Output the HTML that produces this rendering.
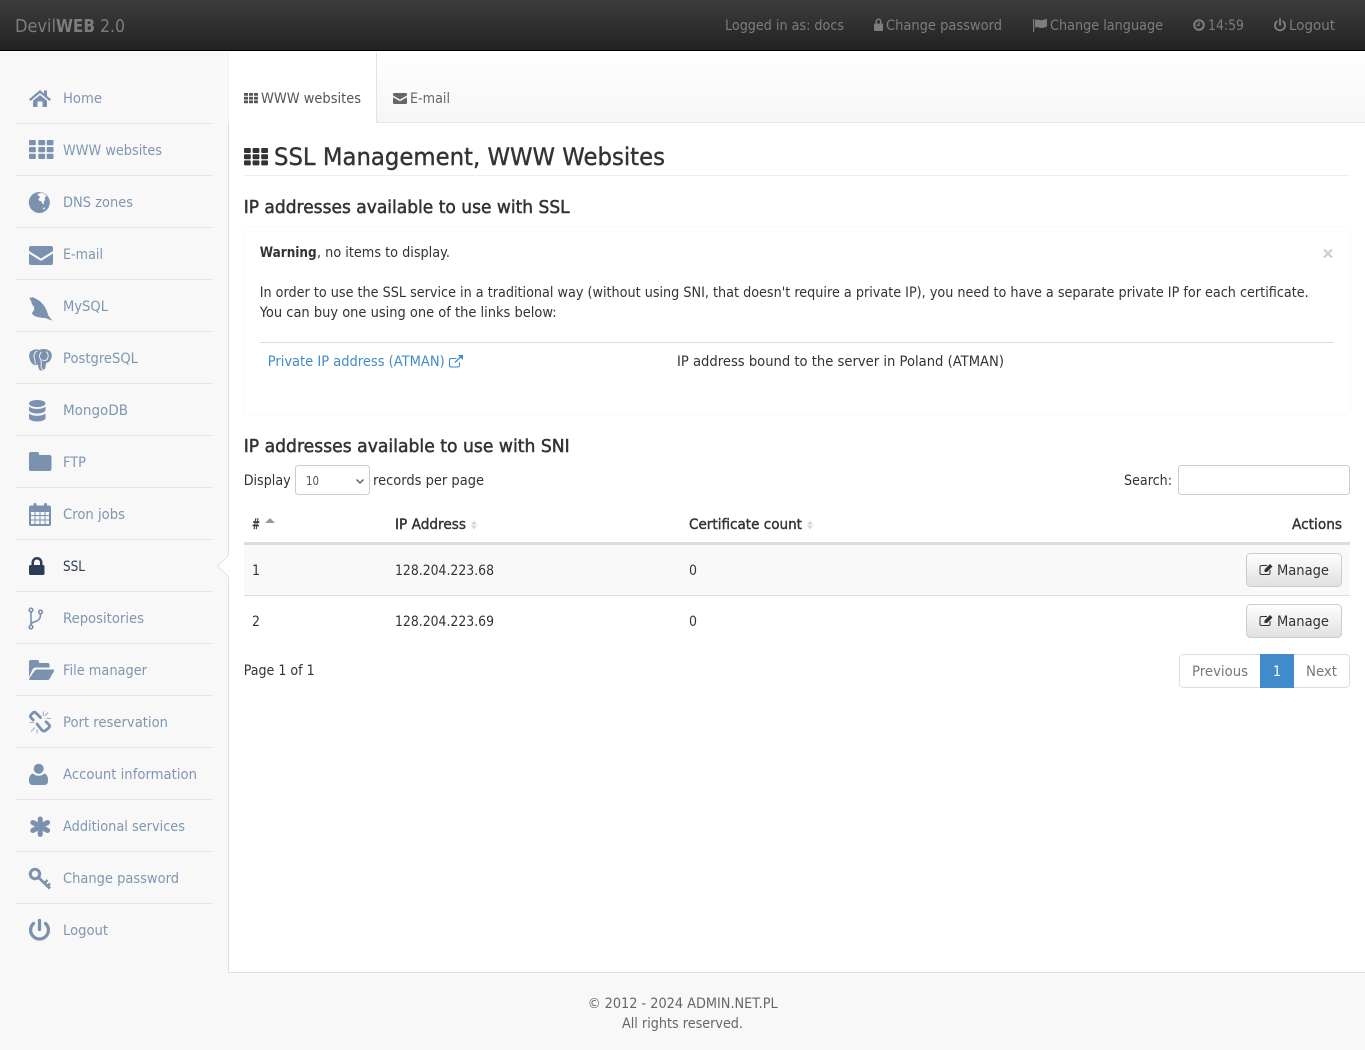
<!DOCTYPE html>
<html lang="en"><head><meta charset="utf-8"><title>DevilWEB 2.0 - SSL Management</title>
<style>
html,body{margin:0;padding:0;background:#f8f8f8;width:1365px;height:1050px;overflow:hidden}
svg{display:block}
text{font-family:"DejaVu Sans","Liberation Sans",sans-serif;font-size:14px;fill:#333;white-space:pre}
.s text{fill:#7f96b2;font-size:14px}
.i{fill:#7a92af}
.t text{fill:#7d7d7d;font-size:14px}
.h3{font-size:18px;stroke:#333;stroke-width:.5px}
.th{stroke:#333;stroke-width:.4px}
</style></head><body>
<svg width="1365" height="1050" viewBox="0 0 1365 1050" xmlns="http://www.w3.org/2000/svg">
<defs>
<linearGradient id="top" x1="0" y1="0" x2="0" y2="1"><stop offset="0" stop-color="#3d3d3d"/><stop offset="1" stop-color="#222"/></linearGradient>
<linearGradient id="tab" x1="0" y1="0" x2="0" y2="1"><stop offset="0" stop-color="#fff"/><stop offset="1" stop-color="#f6f6f6"/></linearGradient>
<linearGradient id="btn" x1="0" y1="0" x2="0" y2="1"><stop offset="0" stop-color="#fff"/><stop offset="1" stop-color="#e0e0e0"/></linearGradient>
</defs>
<rect width="1365" height="1050" fill="#f8f8f8"/>
<!-- content -->
<rect x="229" y="51" width="1136" height="922" fill="#fff"/>
<rect x="228" y="51" width="1" height="72" fill="#eef1f5"/>
<rect x="228" y="123" width="1" height="850" fill="#d9e2ec"/>
<rect x="228" y="972" width="1137" height="1" fill="#d9e2ec"/>
<rect x="377" y="51" width="988" height="71" fill="url(#tab)"/>
<rect x="377" y="122" width="988" height="1" fill="#e5e5e5"/>
<rect x="376" y="53" width="1" height="70" fill="#dde4ec"/>
<!-- topbar -->
<rect width="1365" height="50" fill="url(#top)"/>
<rect y="50" width="1365" height="1" fill="#000"/>
<g class="t">
<text x="15" y="32" style="font-size:18px" textLength="41" lengthAdjust="spacingAndGlyphs">Devil</text>
<text x="56" y="32" style="font-size:18px;font-weight:bold" textLength="39" lengthAdjust="spacingAndGlyphs">WEB</text>
<text x="100" y="32" style="font-size:18px" textLength="25" lengthAdjust="spacingAndGlyphs">2.0</text>
<text x="725" y="30" textLength="119" lengthAdjust="spacingAndGlyphs">Logged in as: docs</text>
<text x="886" y="30" textLength="116" lengthAdjust="spacingAndGlyphs">Change password</text>
<text x="1050" y="30" textLength="113" lengthAdjust="spacingAndGlyphs">Change language</text>
<text x="1208" y="30" textLength="36" lengthAdjust="spacingAndGlyphs">14:59</text>
<text x="1289" y="30" textLength="46" lengthAdjust="spacingAndGlyphs">Logout</text>
</g>
<g fill="#7d7d7d">
<path d="M874 24.500a1 1 0 0 1 1-1h.5v-2a3 3 0 0 1 6 0v2h.5a1 1 0 0 1 1 1V30a1 1 0 0 1-1 1h-7a1 1 0 0 1-1-1zM877 23.500h3v-2a1.500 1.500 0 0 0-3 0z" fill-rule="evenodd"/>
<path d="M1033 19h1.200v13H1033zM1035 20c3-1.500 5 1 8 0 1.500-.4 3-1 4-1v7.500c-1 .3-2.500 1-4 1.400-3 .8-5-1.700-8-.4z"/>
</g>
<circle cx="1199" cy="25" r="4.800" fill="none" stroke="#7d7d7d" stroke-width="2"/>
<path d="M1199 22v3.300h-2.500" fill="none" stroke="#7d7d7d" stroke-width="1.300"/>
<path d="M1276.800 21.500a5 5 0 1 0 6.400 0M1280 19v6" fill="none" stroke="#7d7d7d" stroke-width="1.900" stroke-linecap="round"/>
<!-- sidebar separators -->
<g fill="#e6e6e6">
<rect x="15" y="123" width="198" height="1"/><rect x="15" y="175" width="198" height="1"/><rect x="15" y="227" width="198" height="1"/><rect x="15" y="279" width="198" height="1"/><rect x="15" y="331" width="198" height="1"/><rect x="15" y="383" width="198" height="1"/><rect x="15" y="435" width="198" height="1"/><rect x="15" y="487" width="198" height="1"/><rect x="15" y="539" width="198" height="1"/><rect x="15" y="591" width="198" height="1"/><rect x="15" y="643" width="198" height="1"/><rect x="15" y="695" width="198" height="1"/><rect x="15" y="747" width="198" height="1"/><rect x="15" y="799" width="198" height="1"/><rect x="15" y="851" width="198" height="1"/><rect x="15" y="903" width="198" height="1"/>
</g>
<path d="M229 555L217.500 566L229 577" fill="#fff" stroke="#dfe6ee"/>
<rect x="229" y="556" width="2" height="21" fill="#fff"/>
<!-- sidebar text -->
<g class="s">
<text x="63" y="103" textLength="39" lengthAdjust="spacingAndGlyphs">Home</text>
<text x="63" y="155" textLength="99" lengthAdjust="spacingAndGlyphs">WWW websites</text>
<text x="63" y="207" textLength="70" lengthAdjust="spacingAndGlyphs">DNS zones</text>
<text x="63" y="259" textLength="40" lengthAdjust="spacingAndGlyphs">E-mail</text>
<text x="63" y="311" textLength="45" lengthAdjust="spacingAndGlyphs">MySQL</text>
<text x="63" y="363" textLength="75" lengthAdjust="spacingAndGlyphs">PostgreSQL</text>
<text x="63" y="415" textLength="65" lengthAdjust="spacingAndGlyphs">MongoDB</text>
<text x="63" y="467" textLength="23" lengthAdjust="spacingAndGlyphs">FTP</text>
<text x="63" y="519" textLength="62" lengthAdjust="spacingAndGlyphs">Cron jobs</text>
<text x="63" y="571" textLength="22" lengthAdjust="spacingAndGlyphs" style="fill:#2c3e56">SSL</text>
<text x="63" y="623" textLength="81" lengthAdjust="spacingAndGlyphs">Repositories</text>
<text x="63" y="675" textLength="84" lengthAdjust="spacingAndGlyphs">File manager</text>
<text x="63" y="727" textLength="105" lengthAdjust="spacingAndGlyphs">Port reservation</text>
<text x="63" y="779" textLength="134" lengthAdjust="spacingAndGlyphs">Account information</text>
<text x="63" y="831" textLength="122" lengthAdjust="spacingAndGlyphs">Additional services</text>
<text x="63" y="883" textLength="116" lengthAdjust="spacingAndGlyphs">Change password</text>
<text x="63" y="935" textLength="45" lengthAdjust="spacingAndGlyphs">Logout</text>
</g>
<!-- sidebar icons -->
<g class="i">
<path d="M40 90L29 99.300 30.500 101 40 93 49.500 101 51 99.300 47 96V90.500H44V93.500ZM33 100.800L40 95 47 100.800V106a1 1 0 0 1-1 1H42.500V101.500H37.500V107H34a1 1 0 0 1-1-1Z"/>
<g>
<rect x="29" y="140" width="6.800" height="5.300" rx="1"/><rect x="38.300" y="140" width="6.800" height="5.300" rx="1"/><rect x="46.700" y="140" width="6.800" height="5.300" rx="1"/>
<rect x="29" y="147" width="6.800" height="5.300" rx="1"/><rect x="38.300" y="147" width="6.800" height="5.300" rx="1"/><rect x="46.700" y="147" width="6.800" height="5.300" rx="1"/>
<rect x="29" y="153.700" width="6.800" height="5.300" rx="1"/><rect x="38.300" y="153.700" width="6.800" height="5.300" rx="1"/><rect x="46.700" y="153.700" width="6.800" height="5.300" rx="1"/>
</g>
<circle cx="39.300" cy="202.500" r="10.500"/>
<path d="M38 193.800l3-1 3.500 1 2.200 2.600-2 .8.500 3-1.500 1 .3 2.500-1.500.3-.8-2.500-2.500-.8-.8-2 1.700-1.300-1.200-1.700-1.500-.4zM43.500 207.500l1.800.2-1.300 1.700-1.200-.4z" fill="#f8f8f8"/>
<path d="M31 246h20a2 2 0 0 1 2 2v3L41 258.500 29 251v-3a2 2 0 0 1 2-2zM29 253.500L41 261l12-7.500V263a2 2 0 0 1-2 2H31a2 2 0 0 1-2-2z"/>
<path d="M29.300 297.700L33 297.300 36.500 299 40 301.300 44 305.500 46.700 310.500 48.300 315.500 52.300 320.700 45.500 318 41 317.800 37.500 317 34 315.800 31.700 313.300 33.800 310.500 34.300 307.500 32 304 30.800 300.500Z"/>
<path d="M31 351.500c2.300-2.300 5.500-2.600 8-1.500 3.200-1.500 7.800-1.500 10.800 1 2.700 2.500 2.400 6 .7 9-1 1.700-2.300 2.600-4.300 3-.4 1.500-.5 3.800-1 5.300-.6 2-3.700 2.900-5.200 1.900-1.500-1-1.700-3.400-2-5.700-2.500 1-5 .6-6.800-2-2.200-3.300-3-8.500-.2-12z"/>
<path d="M37.300 351c-2.800 1-4 3.800-3.100 7 .6 2.200 1.400 4 .9 6M41.500 351.800c-1.700 2-2.800 4.200-1.300 6.700 1 1.500 1.300 4 .8 7.500 0 2 1 3.700 2.500 3.700M46 351.500c2.400 2 2.800 4.800 1.300 7.500-1 2-3.800 1.800-5.300.8" fill="none" stroke="#f8f8f8" stroke-width=".9"/>
<path d="M29 403.500c0-2 3.700-3.500 8.200-3.500s8.300 1.500 8.300 3.500-3.800 3.600-8.300 3.600-8.200-1.600-8.200-3.600zM29 406.500c1.700 1.800 4.900 2.400 8.200 2.400s6.600-.6 8.300-2.400V410c0 2-3.800 3.500-8.300 3.500S29 412 29 410zM29 413.500c1.700 1.600 4.900 2.300 8.200 2.300s6.600-.7 8.300-2.300v4.500c0 2-3.800 3.500-8.300 3.500S29 420 29 418z"/>
<path d="M31 452h6a2 2 0 0 1 2 2v1h10.500a2 2 0 0 1 2 2v12a2 2 0 0 1-2 2H31a2 2 0 0 1-2-2V454a2 2 0 0 1 2-2z"/>
<path fill-rule="evenodd" d="M31 505.500h2.500v-1a1.500 1.500 0 0 1 3 0v1h7.500v-1a1.500 1.500 0 0 1 3 0v1H49a2 2 0 0 1 2 2V524a2 2 0 0 1-2 2H31a2 2 0 0 1-2-2V507.500a2 2 0 0 1 2-2zM31 512v3h3.500v-3zM35.500 512v3h4v-3zM40.500 512v3h4v-3zM45.500 512v3H49v-3zM31 516v3.500h3.500V516zM35.500 516v3.500h4V516zM40.500 516v3.500h4V516zM45.500 516v3.500H49V516zM31 520.500V524h3.500v-3.500zM35.500 520.500V524h4v-3.500zM40.500 520.500V524h4v-3.500zM45.500 520.500V524H49v-3.500z"/>
<path fill-rule="evenodd" d="M29 566.500a1.500 1.500 0 0 1 1.500-1.500H31.500v-2.500a5.500 5.500 0 0 1 11 0V565h.5a1.500 1.500 0 0 1 1.500 1.500V573.500a1.500 1.500 0 0 1-1.500 1.500H30.500a1.500 1.500 0 0 1-1.500-1.500zM34 565h6v-2.500a3 3 0 0 0-6 0z" style="fill:#2c3e56"/>
<g fill="none" stroke="#7a92af" stroke-width="1.600">
<circle cx="31" cy="610" r="1.800"/><circle cx="31" cy="627" r="1.800"/><circle cx="40.500" cy="612" r="1.800"/>
<path d="M31 612v13M40.500 614c0 5-2 6.500-5 7.500-2.500.8-4 1-4.500 3"/>
</g>
<path d="M31 660h6a2 2 0 0 1 2 2v1h8.500a2 2 0 0 1 2 2v2.500H36a4 4 0 0 0-3.500 2L29 677V662a2 2 0 0 1 2-2z"/>
<path d="M36.500 669.500H53a1 1 0 0 1 1 1.500l-4.500 8a2 2 0 0 1-1.700 1H30a1 1 0 0 1-.8-1.500l5.300-7.500a2.500 2.500 0 0 1 2-1.500z"/>
<g fill="none" stroke="#7a92af" stroke-width="2.800" stroke-linejoin="round" stroke-linecap="round">
<path d="M40.500 717.500L36 713Q34.300 711.500 32.800 713L31 714.800Q29.800 716.300 31 717.600L33.200 720"/>
<path d="M37 724L42 730.200Q43.800 731.800 45.500 730.500L48.800 727.800Q50.300 726.300 48.800 724.500L46 721.800"/>
</g>
<g fill="none" stroke="#9db0c6" stroke-width="1.100">
<path d="M43.300 711.500v4.500M48 712.500l-3 3.500M51 718.500h-4.500M29.500 722.500h4.500M31 731.500l4-4M37 733.500v-4"/>
</g>
<circle cx="38.700" cy="768.700" r="5"/>
<path d="M33 773.500c1.500 1.500 3.500 2.300 5.700 2.300s4.200-.8 5.700-2.300c2.300.5 3.600 3 3.600 6.500v1.500a3.500 3.500 0 0 1-3.500 3.500H32.500a3.500 3.500 0 0 1-3.500-3.500V780c0-3.500 1.700-6 4-6.500z"/>
<g stroke="#7a92af" stroke-width="5" stroke-linecap="round">
<path d="M40.200 819v15.500M32.800 822.500L47.600 830.500M47.600 822.500L32.800 830.500"/>
</g>
<g fill="none" stroke="#7a92af">
<circle cx="35" cy="874" r="4.700" stroke-width="3"/>
<path d="M38.500 877.500L50 888.500" stroke-width="2.800"/>
<path d="M44 883.500l3.500-3.500M47 886.500l3-3" stroke-width="2.400"/>
</g>
<path d="M33.500 923.500a8.900 8.900 0 1 0 12 0M39.500 920.500v9" fill="none" stroke="#7a92af" stroke-width="3.300" stroke-linecap="round"/>
</g>
<!-- tabs -->
<g fill="#555">
<rect x="244" y="93" width="4" height="2.800" rx=".4"/><rect x="249" y="93" width="4" height="2.800" rx=".4"/><rect x="254" y="93" width="4" height="2.800" rx=".4"/>
<rect x="244" y="96.800" width="4" height="2.800" rx=".4"/><rect x="249" y="96.800" width="4" height="2.800" rx=".4"/><rect x="254" y="96.800" width="4" height="2.800" rx=".4"/>
<rect x="244" y="100.500" width="4" height="2.800" rx=".4"/><rect x="249" y="100.500" width="4" height="2.800" rx=".4"/><rect x="254" y="100.500" width="4" height="2.800" rx=".4"/>
</g>
<text x="261" y="103" textLength="100" lengthAdjust="spacingAndGlyphs" style="fill:#555">WWW websites</text>
<path d="M394 93h12a1 1 0 0 1 1 1v1.500l-7 4-7-4V94a1 1 0 0 1 1-1zM393 97.200l7 4 7-4V103a1 1 0 0 1-1 1H394a1 1 0 0 1-1-1z" fill="#666"/>
<text x="410" y="103" textLength="40" lengthAdjust="spacingAndGlyphs" style="fill:#666">E-mail</text>
<!-- h1 -->
<g fill="#333">
<rect x="244" y="148" width="6.800" height="5" rx="1"/><rect x="252.600" y="148" width="6.800" height="5" rx="1"/><rect x="261.200" y="148" width="6.800" height="5" rx="1"/>
<rect x="244" y="154.200" width="6.800" height="5" rx="1"/><rect x="252.600" y="154.200" width="6.800" height="5" rx="1"/><rect x="261.200" y="154.200" width="6.800" height="5" rx="1"/>
<rect x="244" y="160.400" width="6.800" height="5" rx="1"/><rect x="252.600" y="160.400" width="6.800" height="5" rx="1"/><rect x="261.200" y="160.400" width="6.800" height="5" rx="1"/>
</g>
<text x="274" y="165" textLength="391" lengthAdjust="spacingAndGlyphs" style="font-size:24px;stroke:#333;stroke-width:.4px">SSL Management, WWW Websites</text>
<rect x="244" y="175" width="1106" height="1" fill="#eee"/>
<text class="h3" x="243.700" y="213" textLength="326" lengthAdjust="spacingAndGlyphs">IP addresses available to use with SSL</text>
<!-- panel -->
<rect x="244" y="227" width="1106" height="188" rx="4" fill="#fff" stroke="#f8f8f8"/>
<text x="259.700" y="257" textLength="57" lengthAdjust="spacingAndGlyphs" style="font-weight:bold">Warning</text>
<text x="317" y="257" textLength="133" lengthAdjust="spacingAndGlyphs">, no items to display.</text>
<path d="M1324 249.500l8 8M1332 249.500l-8 8" stroke="#ccc" stroke-width="2"/>
<text x="259.700" y="297" textLength="1049" lengthAdjust="spacingAndGlyphs">In order to use the SSL service in a traditional way (without using SNI, that doesn't require a private IP), you need to have a separate private IP for each certificate.</text>
<text x="259.700" y="317" textLength="297" lengthAdjust="spacingAndGlyphs">You can buy one using one of the links below:</text>
<rect x="260" y="342" width="1074" height="1" fill="#ddd"/>
<text x="267.700" y="366" textLength="177" lengthAdjust="spacingAndGlyphs" style="fill:#428bca">Private IP address (ATMAN)</text>
<path d="M456.500 358.500H451a1.500 1.500 0 0 0-1.500 1.500v5.500a1.500 1.500 0 0 0 1.500 1.500h7a1.500 1.500 0 0 0 1.500-1.500V362.500" fill="none" stroke="#428bca" stroke-width="1.100"/>
<path d="M455 362.500l5.500-5.500" stroke="#428bca" stroke-width="1.300" fill="none"/>
<path d="M458 355h5v5z" fill="#428bca"/>
<text x="677" y="366" textLength="327" lengthAdjust="spacingAndGlyphs">IP address bound to the server in Poland (ATMAN)</text>
<!-- SNI -->
<text class="h3" x="243.700" y="452" textLength="326" lengthAdjust="spacingAndGlyphs">IP addresses available to use with SNI</text>
<text x="243.700" y="485" textLength="47" lengthAdjust="spacingAndGlyphs">Display</text>
<rect x="295.500" y="465.500" width="74" height="29" rx="3" fill="#fff" stroke="#ccc"/>
<text x="306" y="485" textLength="13" lengthAdjust="spacingAndGlyphs" style="font-size:12px;fill:#555">10</text>
<path d="M356.500 479.500l3.500 3.500 3.500-3.500" fill="none" stroke="#555" stroke-width="1.300"/>
<text x="373" y="485" textLength="111" lengthAdjust="spacingAndGlyphs">records per page</text>
<text x="1124" y="485" textLength="48" lengthAdjust="spacingAndGlyphs">Search:</text>
<rect x="1178.500" y="465.500" width="171" height="29" rx="3" fill="#fff" stroke="#ccc"/>
<!-- table -->
<text class="th" x="252" y="529" textLength="8" lengthAdjust="spacingAndGlyphs">#</text>
<path d="M265 523l5-5 5 5z" fill="#999"/>
<text class="th" x="395" y="529" textLength="71" lengthAdjust="spacingAndGlyphs">IP Address</text>
<path d="M471 524.500l3-4 3 4zM471 525.500l3 4 3-4z" fill="#d8d8d8"/>
<text class="th" x="689" y="529" textLength="113" lengthAdjust="spacingAndGlyphs">Certificate count</text>
<path d="M807 524.500l3-4 3 4zM807 525.500l3 4 3-4z" fill="#d8d8d8"/>
<text class="th" x="1292" y="529" textLength="50" lengthAdjust="spacingAndGlyphs">Actions</text>
<rect x="244" y="545" width="1106" height="50" fill="#f9f9f9"/>
<rect x="244" y="542" width="1106" height="3" fill="#ddd"/>
<rect x="244" y="595" width="1106" height="1" fill="#ddd"/>
<text x="252" y="575" textLength="8" lengthAdjust="spacingAndGlyphs">1</text>
<text x="395" y="575" textLength="99" lengthAdjust="spacingAndGlyphs">128.204.223.68</text>
<text x="689" y="575" textLength="8" lengthAdjust="spacingAndGlyphs">0</text>
<text x="252" y="626" textLength="8" lengthAdjust="spacingAndGlyphs">2</text>
<text x="395" y="626" textLength="99" lengthAdjust="spacingAndGlyphs">128.204.223.69</text>
<text x="689" y="626" textLength="8" lengthAdjust="spacingAndGlyphs">0</text>
<!-- buttons -->
<rect x="1246.500" y="553.500" width="95" height="33" rx="4" fill="url(#btn)" stroke="#ccc"/>
<path d="M1267 565.500h-5.500a1.500 1.500 0 0 0-1.500 1.500v6a1.500 1.500 0 0 0 1.500 1.500h7a1.500 1.500 0 0 0 1.500-1.500V570" fill="none" stroke="#333" stroke-width="1"/>
<path d="M1264.500 569.500l5.500-5.500 2.500 2.500-5.500 5.500H1264.500z" fill="#333"/>
<text x="1277" y="575" textLength="52" lengthAdjust="spacingAndGlyphs">Manage</text>
<rect x="1246.500" y="604.500" width="95" height="33" rx="4" fill="url(#btn)" stroke="#ccc"/>
<path d="M1267 616.500h-5.500a1.500 1.500 0 0 0-1.500 1.500v6a1.500 1.500 0 0 0 1.500 1.500h7a1.500 1.500 0 0 0 1.500-1.500V621" fill="none" stroke="#333" stroke-width="1"/>
<path d="M1264.500 620.500l5.500-5.500 2.500 2.500-5.500 5.500H1264.500z" fill="#333"/>
<text x="1277" y="626" textLength="52" lengthAdjust="spacingAndGlyphs">Manage</text>
<!-- pagination -->
<text x="243.700" y="675" textLength="71" lengthAdjust="spacingAndGlyphs">Page 1 of 1</text>
<rect x="1179.500" y="654.500" width="170" height="33" rx="4" fill="#fff" stroke="#ddd"/>
<rect x="1260" y="654" width="34" height="34" fill="#428bca"/>
<text x="1192" y="676" textLength="56" lengthAdjust="spacingAndGlyphs" style="fill:#777">Previous</text>
<text x="1273" y="676" textLength="8" lengthAdjust="spacingAndGlyphs" style="fill:#fff">1</text>
<text x="1306" y="676" textLength="31" lengthAdjust="spacingAndGlyphs" style="fill:#777">Next</text>
<!-- footer -->
<text x="587.700" y="1008" textLength="190" lengthAdjust="spacingAndGlyphs" style="fill:#666">© 2012 - 2024 ADMIN.NET.PL</text>
<text x="622" y="1028" textLength="121" lengthAdjust="spacingAndGlyphs" style="fill:#666">All rights reserved.</text>
</svg>
</body></html>
